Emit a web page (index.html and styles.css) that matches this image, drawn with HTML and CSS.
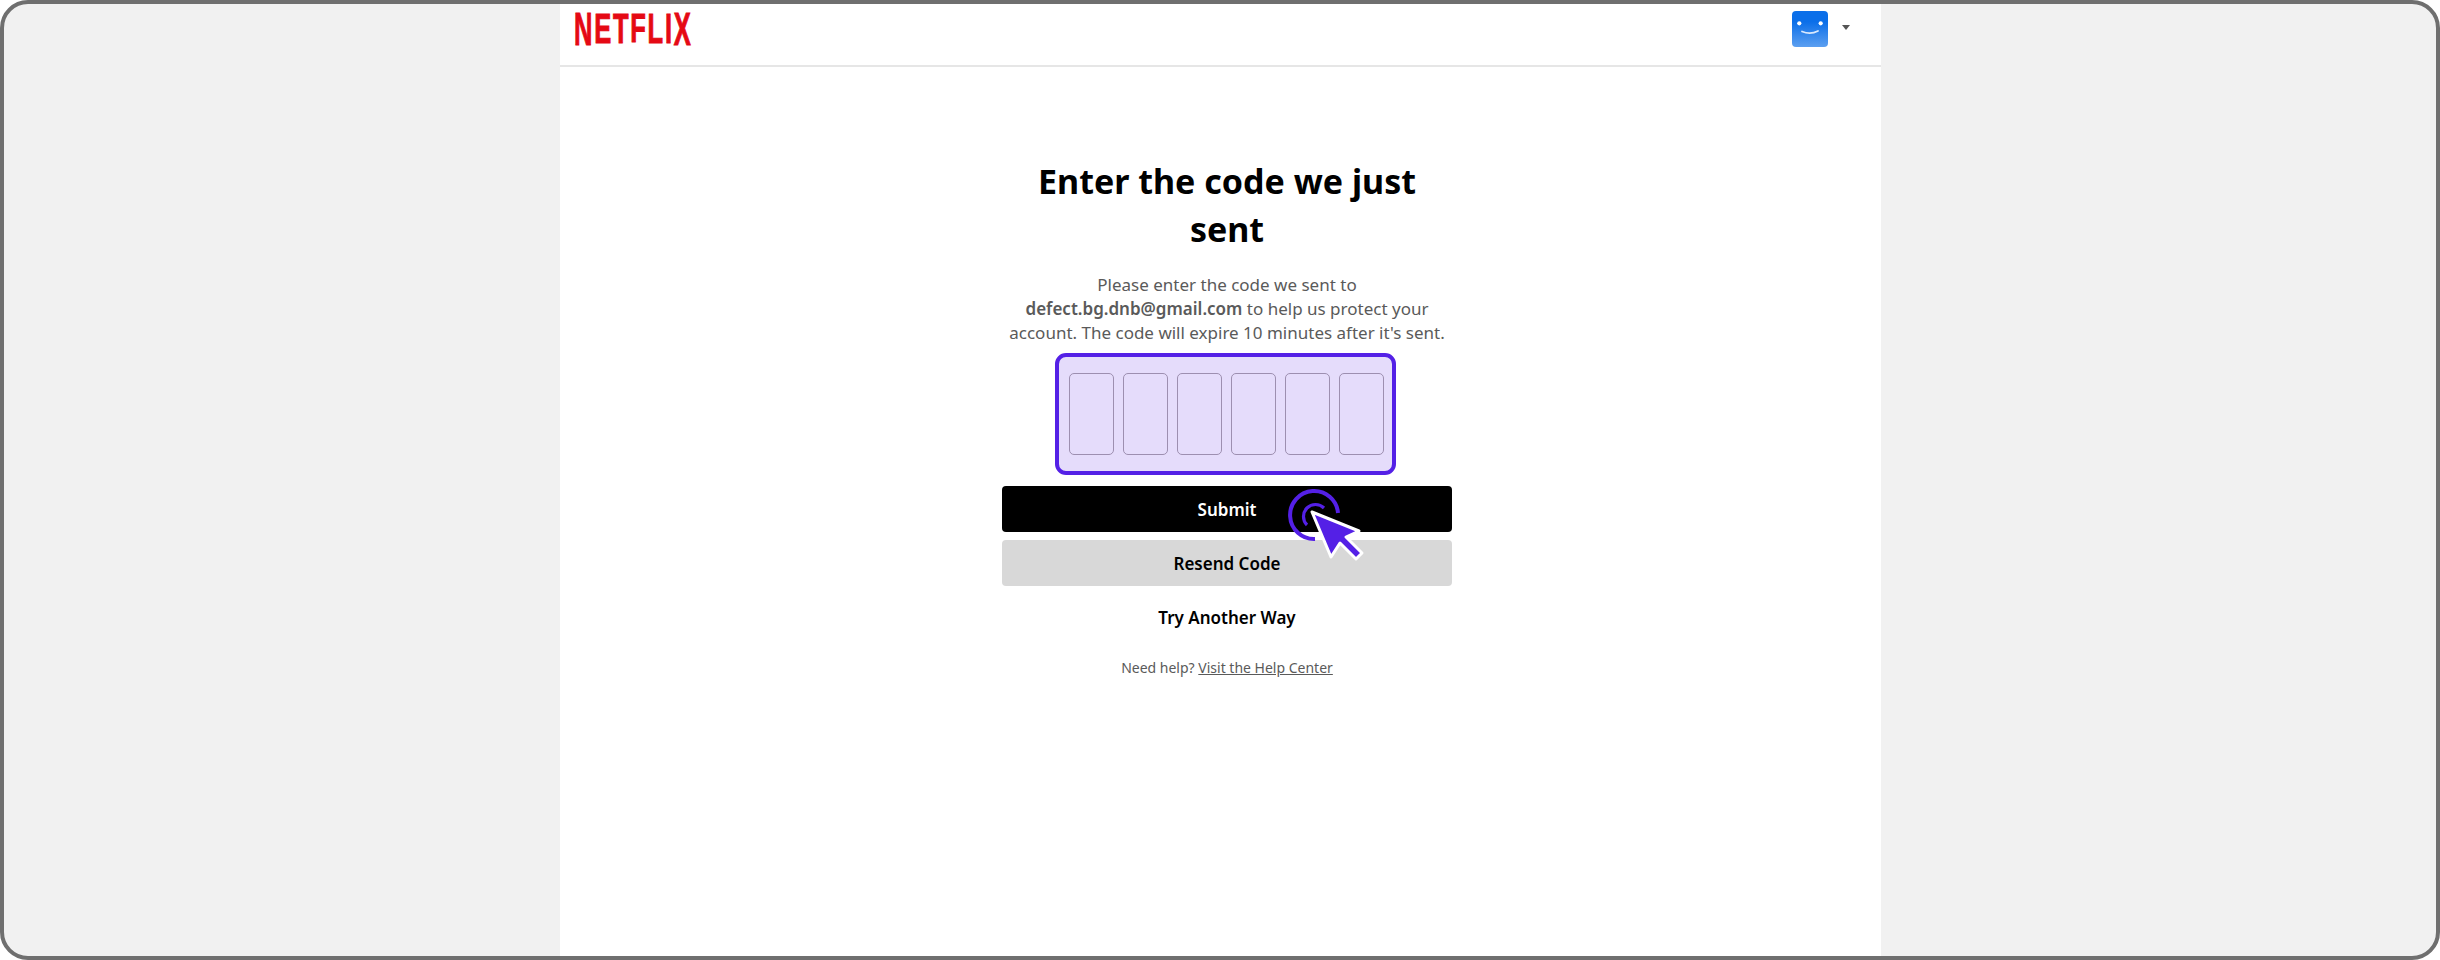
FILE: index.html
```html
<!DOCTYPE html>
<html lang="en">
<head>
    <meta charset="UTF-8">
    <meta name="viewport" content="width=device-width, initial-scale=1.0">
    <title>Enter the code</title>
    <link rel="stylesheet" href="styles.css">
</head>
<body>
    <div class="frame">
        <div class="panel">
            <!-- Header -->
            <div class="header">
                <div class="logo"><span>N</span><span>E</span><span>T</span><span>F</span><span>L</span><span>I</span><span>X</span></div>
                <div class="account">
                    <svg class="avatar" width="36" height="36" viewBox="0 0 36 36" aria-hidden="true">
                        <defs>
                            <linearGradient id="avatarFill" x1="0" y1="0" x2="0" y2="1">
                                <stop offset="0.3" stop-color="#0b6fe9"/>
                                <stop offset="1" stop-color="#5c9ff0"/>
                            </linearGradient>
                        </defs>
                        <rect width="36" height="36" rx="4" fill="url(#avatarFill)"/>
                        <circle cx="7.3" cy="12.3" r="2.1" fill="#fff"/>
                        <circle cx="28.7" cy="12.3" r="2.1" fill="#fff"/>
                        <path d="M15 20.5 C 20 22.6 26 22.6 31 20" transform="translate(-5 0)" fill="none" stroke="#d9e9fd" stroke-width="1.8" stroke-linecap="round"/>
                    </svg>
                    <span class="caret"></span>
                </div>
            </div>

            <!-- Code form -->
            <div class="content">
                <h1>Enter the code we just<br>sent</h1>
                <div class="intro">
                    <p>Please enter the code we sent to</p>
                    <p><b>defect.bg.dnb@gmail.com</b> to help us protect your</p>
                    <p>account. The code will expire 10 minutes after it's sent.</p>
                </div>
                <div class="code-box">
                    <div class="code-cell"></div>
                    <div class="code-cell"></div>
                    <div class="code-cell"></div>
                    <div class="code-cell"></div>
                    <div class="code-cell"></div>
                    <div class="code-cell"></div>
                </div>
                <div class="actions">
                    <button class="btn btn-submit" type="button">Submit</button>
                    <button class="btn btn-resend" type="button">Resend Code</button>
                    <svg class="pointer" width="84" height="80" viewBox="0 0 84 80" aria-hidden="true">
                        <path d="M53 27 A24 24 0 1 0 30 53" fill="none" stroke="#5420e6" stroke-width="4"/>
                        <path d="M39 22 A12 12 0 1 0 22 39" fill="none" stroke="#5420e6" stroke-width="3.2"/>
                        <path d="M27 26 L74 45 L61 51 L77 67 L71 73 L55 57 L46 71 Z" fill="#5420e6" stroke="#fff" stroke-width="3" stroke-linejoin="round"/>
                    </svg>
                </div>
                <a class="try-link" href="#">Try Another Way</a>
                <p class="help">Need help? <a href="#">Visit the Help Center</a></p>
            </div>
        </div>
    </div>
</body>
</html>
```

FILE: styles.css
```css
* {
    box-sizing: border-box;
}
body {
    margin: 0;
    font-family: "Noto Sans", Arial, sans-serif;
}
.frame {
    height: 960px;
    background-color: #f1f1f1;
    border: 4px solid #6f6f6f;
    border-radius: 28px;
    overflow: hidden;
    display: flex;
    justify-content: center;
}
.panel {
    width: 1321px;
    background-color: white;
}

/* Header styling */
.header {
    height: 63px;
    padding: 7px 31px 0 14px;
    border-bottom: 2px solid #e6e6e6;
    display: flex;
    justify-content: space-between;
    align-items: flex-start;
}
.logo {
    display: flex;
    color: #e50914;
    font-family: "Liberation Sans", sans-serif;
    font-weight: bold;
    font-size: 44px;
    line-height: 36px;
    letter-spacing: 3px;
    -webkit-text-stroke: 1px #e50914;
    transform: scaleX(0.58);
    transform-origin: left top;
}
.logo span {
    display: block;
    transform-origin: 50% 4px;
}
.logo span:nth-child(1), .logo span:nth-child(7) { transform: scaleY(1.04); }
.logo span:nth-child(2), .logo span:nth-child(6) { transform: scaleY(0.98); }
.logo span:nth-child(3), .logo span:nth-child(5) { transform: scaleY(0.95); }
.logo span:nth-child(4) { transform: scaleY(0.93); }
.account {
    display: flex;
    align-items: center;
    gap: 14px;
}
.avatar {
    display: block;
}
.caret {
    width: 0;
    height: 0;
    margin-top: -3px;
    border-left: 4px solid transparent;
    border-right: 4px solid transparent;
    border-top: 5px solid #555;
}

/* Form Styling */
.content {
    width: 450px;
    margin: 0 auto;
    padding-top: 90px;
    position: relative;
    left: 7px;
    text-align: center;
}
h1 {
    margin: 0 0 20px;
    font-size: 34px;
    line-height: 48px;
    font-weight: bold;
    color: black;
}
.intro {
    margin: 0 0 8px;
    font-size: 17px;
    line-height: 24px;
    color: #5a5a5a;
}
.intro p {
    margin: 0;
}
.intro b {
    font-weight: 600;
}
.code-box {
    width: 341px;
    height: 122px;
    margin: 0 0 11px 53px;
    padding-left: 2px;
    border: 4px solid #5420e6;
    border-radius: 11px;
    background-color: #e5dcfb;
    display: flex;
    justify-content: center;
    align-items: center;
    gap: 9px;
}
.code-cell {
    width: 45px;
    height: 82px;
    border: 1px solid #9d8fb0;
    border-radius: 5px;
}
.actions {
    position: relative;
    display: flex;
    flex-direction: column;
    gap: 8px;
}
.btn {
    height: 46px;
    border: none;
    border-radius: 4px;
    font-family: inherit;
    font-size: 17px;
    font-weight: 600;
}
.btn-submit {
    background-color: black;
    color: white;
}
.btn-resend {
    background-color: #d8d8d8;
    color: black;
}
.pointer {
    position: absolute;
    left: 283px;
    top: 0;
}
.try-link {
    display: block;
    margin-top: 20px;
    font-size: 17px;
    line-height: 24px;
    font-weight: 600;
    color: black;
    text-decoration: none;
}
.help {
    margin: 28px 0 0;
    font-size: 14px;
    line-height: 20px;
    color: #5a5a5a;
}
.help a {
    color: #5a5a5a;
}
```
